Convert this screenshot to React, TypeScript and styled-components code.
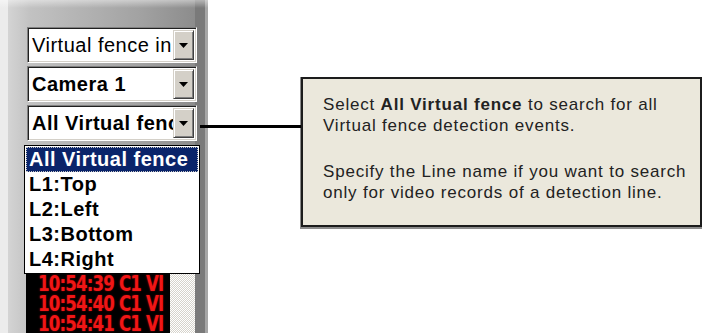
import styled, { createGlobalStyle } from "styled-components";

const GlobalStyle = createGlobalStyle`
  body {
    margin: 0;
    background: #ffffff;
  }
`;

const Page = styled.div`
  display: flex;
  align-items: flex-start;
  width: 702px;
  height: 333px;
  overflow: hidden;
  background: #ffffff;
  font-family: "Liberation Sans", Arial, sans-serif;
`;

const Sidebar = styled.div`
  position: relative;
  flex-shrink: 0;
  width: 208px;
  height: 333px;
  box-sizing: border-box;
  padding: 27px 0 0 24px;
  display: flex;
  flex-direction: column;
  gap: 3px;
  background:
    linear-gradient(to bottom, rgba(255, 255, 255, 0.45) 0, rgba(255, 255, 255, 0) 8px),
    linear-gradient(
      to right,
      #ececec 0 8px,
      #d4d4d4 8px,
      #c2c2c2 30px,
      #a2a2a2 140px,
      #8c8c8c 195px,
      #7a7a7a 195px 205px,
      #a6a6a6 205px
    );
`;

const Combo = styled.div<{ $bold?: boolean }>`
  margin-left: 3px;
  width: 170px;
  height: 36px;
  box-sizing: border-box;
  display: flex;
  align-items: stretch;
  padding: 2px;
  background: #ffffff;
  border: 1px solid;
  border-color: #808080 #ffffff #ffffff #808080;
  box-shadow: inset 1px 1px #202020, inset -1px -1px #d4d0c8;
  font-size: 20px;
  font-weight: ${(p) => (p.$bold ? 700 : 400)};
  letter-spacing: 0.5px;
  color: #000;
`;

const ComboText = styled.span`
  flex: 1;
  min-width: 0;
  overflow: hidden;
  white-space: nowrap;
  line-height: 30px;
  padding-left: 2px;
`;

const DropButton = styled.span`
  flex-shrink: 0;
  width: 21px;
  box-sizing: border-box;
  display: flex;
  align-items: center;
  justify-content: center;
  background: #d4d0c8;
  border: 1px solid;
  border-color: #d4d0c8 #404040 #404040 #d4d0c8;
  box-shadow: inset 1px 1px #ffffff, inset -1px -1px #808080;
`;

const DropList = styled.ul`
  position: absolute;
  top: 145px;
  left: 24px;
  width: 176px;
  box-sizing: border-box;
  margin: 0;
  padding: 1px;
  list-style: none;
  background: #ffffff;
  border: 1px solid #000000;
  z-index: 2;
`;

const Option = styled.li<{ $selected?: boolean }>`
  height: 25px;
  box-sizing: border-box;
  padding-left: 2px;
  font-size: 20px;
  font-weight: 700;
  letter-spacing: 0.5px;
  line-height: 23px;
  white-space: nowrap;
  color: ${(p) => (p.$selected ? "#ffffff" : "#000000")};
  background: ${(p) => (p.$selected ? "#0a246a" : "transparent")};
  border: 1px dotted ${(p) => (p.$selected ? "#c8c8c8" : "transparent")};
`;

const Log = styled.div`
  margin-top: 1px;
  margin-left: 2px;
  width: 169px;
  flex: 1;
  display: flex;
  min-height: 0;
`;

const LogLines = styled.div`
  flex: 1;
  background: #000000;
  padding: 9px 0 0 12px;
  overflow: hidden;
`;

const LogRow = styled.div`
  font-family: "DejaVu Sans Condensed", "DejaVu Sans", sans-serif;
  font-stretch: condensed;
  font-weight: 700;
  font-size: 22px;
  letter-spacing: -1px;
  line-height: 20px;
  height: 20px;
  white-space: nowrap;
  color: #f01616;
  text-shadow: 0 0 2px #8a0000;
  transform: scaleX(0.84);
  transform-origin: left center;
`;

const Track = styled.div`
  width: 25px;
  background: repeating-conic-gradient(#ffffff 0 25%, #d6d3cb 0 50%) 0 0 / 2px 2px;
`;

const Callout = styled.div`
  position: relative;
  z-index: 1;
  flex-shrink: 0;
  margin: 77px 0 0 93px;
  width: 401px;
  height: 150px;
  box-sizing: border-box;
  padding: 15px 0 0 20px;
  background: #ebe8dc;
  border: 2px solid #1c1c1c;
  box-shadow: 0 1px 0 1px #8c8c8c;
  color: #222222;

  &::before {
    content: "";
    position: absolute;
    left: -103px;
    top: 46px;
    width: 101px;
    height: 3px;
    background: #000000;
  }
`;

const Note = styled.p`
  margin: 0;
  font-size: 17px;
  letter-spacing: 0.8px;
  line-height: 21px;
  white-space: nowrap;

  & + & {
    margin-top: 25px;
  }
`;

const Arrow = () => (
  <svg width="9" height="5" viewBox="0 0 9 5">
    <polygon points="0,0 9,0 4.5,5" fill="#000" />
  </svg>
);

const combos = [
  { label: "Virtual fence in", bold: false },
  { label: "Camera 1", bold: true },
  { label: "All Virtual fence", bold: true },
];

const options = ["All Virtual fence", "L1:Top", "L2:Left", "L3:Bottom", "L4:Right"];

const logTimes = ["33", "34", "35", "36", "37", "38", "39", "40", "41"];

export default function App() {
  return (
    <>
      <GlobalStyle />
      <Page>
        <Sidebar>
          {combos.map((c) => (
            <Combo key={c.label} $bold={c.bold}>
              <ComboText>{c.label}</ComboText>
              <DropButton>
                <Arrow />
              </DropButton>
            </Combo>
          ))}
          <Log>
            <LogLines>
              {logTimes.map((s) => (
                <LogRow key={s}>10:54:{s} C1 VI</LogRow>
              ))}
            </LogLines>
            <Track />
          </Log>
          <DropList>
            {options.map((o, i) => (
              <Option key={o} $selected={i === 0}>
                {o}
              </Option>
            ))}
          </DropList>
        </Sidebar>
        <Callout>
          <Note>
            Select <b>All Virtual fence</b> to search for all
            <br />
            Virtual fence detection events.
          </Note>
          <Note>
            Specify the Line name if you want to search
            <br />
            only for video records of a detection line.
          </Note>
        </Callout>
      </Page>
    </>
  );
}
